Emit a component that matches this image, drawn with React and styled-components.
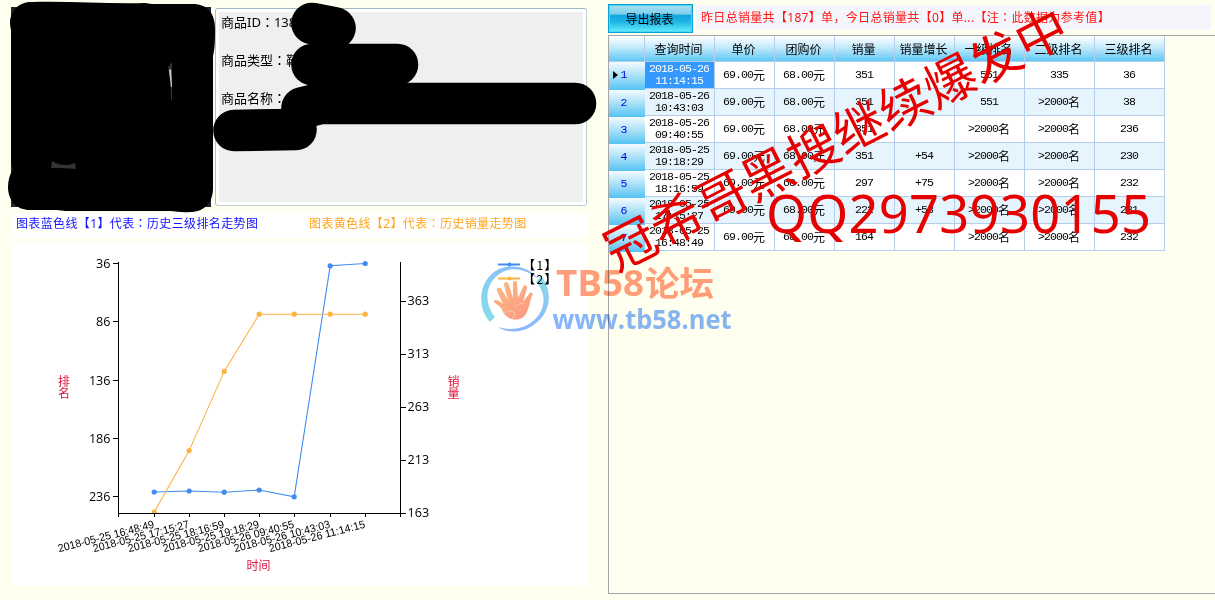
import React from "react"
import styled, { createGlobalStyle } from "styled-components"

const GlobalStyle = createGlobalStyle`
  body {
    margin: 0;
    overflow: hidden;
    background: #fffff0;
  }
`
const Container = styled.div`
  position: relative;
  display: flex;
  width: 1215px;
  height: 600px;
  overflow: hidden;
  background: #fffff0;
  font-family: "Noto Sans", "Noto Sans CJK SC", sans-serif;
`
const Left = styled.div`
  flex: none;
  width: 577px;
  padding: 7px 20px 0 11px;
`
const Right = styled.div`
  flex: 1;
  padding-top: 4px;
`
const Product = styled.div`
  display: flex;
  align-items: flex-start;
  gap: 4px;
`
const Photo = styled.div`
  width: 200px;
  height: 200px;
  background: #23222c;
`
const Info = styled.div`
  box-sizing: border-box;
  width: 372px;
  height: 198px;
  margin-top: 1px;
  padding: 3px;
  border: 1px solid;
  border-color: #9db7c4 #b5cfd4 #bcd3d6 #a9c2cc;
  border-radius: 3px;
  background: #fff;
`
const InfoBody = styled.div`
  box-sizing: border-box;
  height: 100%;
  padding: 0 2px;
  background: #efefef;
`
const InfoLine = styled.div`
  height: 38px;
  line-height: 20px;
  font-size: 13px;
  color: #000;
  white-space: nowrap;
`
const Colon = styled.span`
  font-family: "Noto Sans CJK TC", sans-serif;
  line-height: 1;
`
const Captions = styled.div`
  display: flex;
  box-sizing: border-box;
  height: 25px;
  margin-top: 6px;
  padding-left: 5px;
  background: #fff;
`
const Caption = styled.div`
  flex: none;
  width: ${({ $width }) => $width}px;
  font-size: 12px;
  line-height: 22px;
  letter-spacing: 0.37px;
  color: ${({ $color }) => $color};
  white-space: nowrap;
`
const ChartBox = styled.svg`
  display: block;
  margin-top: 5px;
  background: #fff;
`
const Toolbar = styled.div`
  display: flex;
  gap: 3px;
  height: 31px;
`
const Button = styled.button`
  box-sizing: border-box;
  width: 85px;
  height: 29px;
  padding: 0 2px 0 0;
  border: 1px solid #08a2d6;
  box-shadow: inset 0 0 0 1px #4fd4f5;
  background: linear-gradient(#a9e0f2 0%, #7ccfec 34%, #14a3dc 37%, #1fb4e6 62%, #62effc 100%);
  font-family: "Noto Sans CJK SC", sans-serif;
  font-size: 12px;
  line-height: 24px;
  color: #000;
`
const Notice = styled.div`
  box-sizing: border-box;
  width: 515px;
  height: 25px;
  margin-top: 1px;
  padding-left: 5px;
  background: #f4f6fb;
  font-size: 12px;
  line-height: 26px;
  letter-spacing: 0.32px;
  color: #ff1414;
  white-space: nowrap;
`
const Grid = styled.div`
  box-sizing: border-box;
  height: 559px;
  border: 1px solid #a5a5a8;
  border-right: none;
`
const Row = styled.div`
  display: grid;
  grid-template-columns: 36px 70px repeat(4, 60px) repeat(3, 70px);
  width: 556px;
  height: ${({ $head }) => ($head ? 26 : 27)}px;
  background: ${({ $alt }) => ($alt ? "#e6f5fd" : "#fff")};
`
const Cell = styled.div`
  box-sizing: border-box;
  display: flex;
  align-items: center;
  justify-content: center;
  padding-right: 1px;
  border-right: 1px solid #b4cdea;
  border-bottom: 1px solid #b4cdea;
  font-family: "Noto Sans CJK SC", sans-serif;
  font-size: 12px;
  line-height: 12px;
  text-align: center;
  white-space: nowrap;
  color: ${({ $selected }) => ($selected ? "#fff" : "#000")};
  background: ${({ $selected }) => ($selected ? "#3399ff" : "transparent")};
`
const HeadCell = styled(Cell)`
  padding-right: 2px;
  background: linear-gradient(#fff, #c4eafb 45%, #5ec8f6);
`
const RowHead = styled(Cell)`
  position: relative;
  padding: 0 7px 2px 0;
  margin: ${({ $first }) => ($first ? "0 0 -1px" : "1px 0 -1px")};
  border: none;
  background: linear-gradient(#f4fbfe, #a8e0f8 50%, #55c3f4);
  color: #0000e6;
`
const Pointer = styled.span`
  position: absolute;
  left: 4px;
  top: 9px;
  border: 4px solid transparent;
  border-left: 5px solid #000;
  border-right: none;
`
const Num = styled.span`
  font-family: "Liberation Mono", monospace;
  font-size: 11.5px;
  letter-spacing: -0.9px;
`
const Overlay = styled.svg`
  position: absolute;
  left: 0;
  top: 0;
  pointer-events: none;
`
const Blend = styled(Overlay)`
  mix-blend-mode: multiply;
`

const columns = ["查询时间", "单价", "团购价", "销量", "销量增长", "一级排名", "二级排名", "三级排名"]

const rows = [
  { date: "2018-05-26", time: "11:14:15", sales: 351, growth: "", first: 551, second: 335, third: 36 },
  { date: "2018-05-26", time: "10:43:03", sales: 351, growth: "", first: 551, second: 0, third: 38 },
  { date: "2018-05-26", time: "09:40:55", sales: 351, growth: "", first: 0, second: 0, third: 236 },
  { date: "2018-05-25", time: "19:18:29", sales: 351, growth: "+54", first: 0, second: 0, third: 230 },
  { date: "2018-05-25", time: "18:16:59", sales: 297, growth: "+75", first: 0, second: 0, third: 232 },
  { date: "2018-05-25", time: "17:15:27", sales: 222, growth: "+58", first: 0, second: 0, third: 231 },
  { date: "2018-05-25", time: "16:48:49", sales: 164, growth: "", first: 0, second: 0, third: 232 },
]

const rankTicks = [[36, 263.5], [86, 321.5], [136, 380.5], [186, 438.5], [236, 496.5]]
const salesTicks = [[363, 301.5], [313, 354.5], [263, 407.5], [213, 460.5], [163, 513.5]]
const tickX = [154.5, 189.5, 224.5, 259.5, 294.5, 330.5, 365.5]
const rankY = [492, 491, 492.2, 490, 496.8, 265.8, 263.5]
const salesY = [512, 450.6, 371.4, 314.2, 314.2, 314.2, 314.2]

// rank 0 means the item fell outside the first 2000
const Rank = ({ value }) =>
  value ? <Num>{value}</Num> : <><Num>&gt;2000</Num>名</>

const Series = ({ ys, color }) => (
  <g fill={color}>
    <polyline
      points={ys.map((y, i) => `${tickX[i] - 0.3},${y}`).join(" ")}
      fill="none"
      stroke={color}
      strokeWidth="1.1"
    />
    {ys.map((y, i) => (
      <circle key={i} cx={tickX[i] - 0.3} cy={y} r="2.6" />
    ))}
  </g>
)

function Chart() {
  const labels = [...rows].reverse()
  return (
    <ChartBox width="577" height="343" viewBox="11 243 577 343">
      <defs>
        <clipPath id="plot">
          <rect x="118" y="255" width="290" height="258" />
        </clipPath>
      </defs>
      <g clipPath="url(#plot)">
        <Series ys={rankY} color="#418cf0" />
        <Series ys={salesY} color="#fcb441" />
      </g>
      <path d="M118.5 262V517M118 513.5H406M400.5 262V517" stroke="#000" fill="none" />
      <g fontFamily="Open Sans" fontSize="12.6" fill="#000">
        {rankTicks.map(([n, y]) => (
          <g key={n}>
            <path d={`M113 ${y}h5`} stroke="#000" />
            <text x="110.5" y={y + 4} textAnchor="end">{n}</text>
          </g>
        ))}
        {salesTicks.map(([n, y]) => (
          <g key={n}>
            <path d={`M401 ${y}h5`} stroke="#000" />
            <text x="407.5" y={y + 3.8}>{n}</text>
          </g>
        ))}
      </g>
      <g fontFamily="Liberation Sans" fontSize="11" fill="#000">
        {labels.map((row, i) => (
          <g key={i}>
            <path d={`M${tickX[i]} 514v3`} stroke="#000" />
            <text
              transform={`translate(${tickX[i] + 0.3} 527.5) rotate(-14.5)`}
              textAnchor="end"
              textLength="99"
              lengthAdjust="spacingAndGlyphs"
            >
              {row.date} {row.time}
            </text>
          </g>
        ))}
      </g>
      <g fontFamily="Noto Sans CJK SC" fontSize="12" fill="#dc143c">
        <text x="58" y="386">排</text>
        <text x="58" y="398">名</text>
        <text x="447.5" y="386">销</text>
        <text x="447.5" y="398">量</text>
        <text x="246.5" y="570">时间</text>
      </g>
      <path d="M498 264.5h22" stroke="#418cf0" strokeWidth="2" />
      <circle cx="509.5" cy="264.5" r="2" fill="#418cf0" />
      <path d="M498 278.5h22" stroke="#fcb441" strokeWidth="2" />
      <circle cx="509.5" cy="278.5" r="2" fill="#fcb441" />
      <g fontFamily="Noto Sans CJK SC" fontSize="12" fill="#000">
        {[1, 2].map((n) => (
          <g key={n}>
            <text x="523" y={255.5 + n * 14} fontWeight="900">【</text>
            <text x="536.5" y={255.5 + n * 14}>{n}</text>
            <text x="544.5" y={255.5 + n * 14} fontWeight="900">】</text>
          </g>
        ))}
      </g>
    </ChartBox>
  )
}

const Scribbles = () => (
  <Overlay width="620" height="230" viewBox="0 0 620 230">
    <path d="M10 24C10 10 19 2 32 2C70 1 108 4 145 3L152 4H193C207 4 215 13 215 28C215 40 215 48 213 56V188C213 202 205 212 190 212C182 213 176 211 170 211H68C60 211 60 210 54 210H30C17 210 8 201 8 187C8 180 10 174 13 169C11 166 11 162 11 157V31Z" />
    <path d="M168 67l4-5v38l-1 0c0-12-1-21-3-33z" fill="#333" />
    <path d="M169 70l2-1 1 18-1 0z" fill="#ccc" />
    <path d="M52 161c7 5 16 5 23 2l1 6c-8-1-16-1-25-1z" fill="#333" />
    <g fill="none" stroke="#000" strokeWidth="41.6" strokeLinecap="round" strokeLinejoin="round">
      <path d="M312 23.5L335 28" />
      <path d="M312 64.5H397.5" />
      <path d="M302 108L320 103.5H575.5" />
      <path d="M234 130.5L296 129.5" />
    </g>
  </Overlay>
)

const ForumMark = () => (
  <Blend width="760" height="345" viewBox="0 0 760 345">
    <defs>
      <linearGradient id="ringLeft" x1="0" y1="1" x2="1" y2="0">
        <stop offset="0" stopColor="#7fdde8" />
        <stop offset="1" stopColor="#86b2fb" />
      </linearGradient>
      <linearGradient id="ringRight" x1="0" y1="0" x2="0" y2="1">
        <stop offset="0" stopColor="#82dbe9" />
        <stop offset="1" stopColor="#86b2fb" />
      </linearGradient>
      <linearGradient id="palm" x1="0" y1="0" x2="1" y2="1">
        <stop offset="0" stopColor="#fcb678" />
        <stop offset="1" stopColor="#fd927f" />
      </linearGradient>
    </defs>
    <g opacity="0.95">
      <path d="M490 322C475 305 480 278 499 269C514 263 531 268 538 279C525 268 509 266 498 275C485 285 484 303 495 317Z" fill="url(#ringLeft)" />
      <path d="M541 276C553 290 551 312 536 323C524 334 506 333 498 327C511 331 524 329 533 321C546 310 547 294 536 282Z" fill="url(#ringRight)" />
      <path d="M503 312C501 306 498 306 494 302C493 299 498 299 503 304L497 291C496 287 500 286 502 290L508 300L504 285C504 281 508 281 509 285L513 298L513 283C513 280 517 280 517 283L518 298L523 287C524 284 528 285 527 288L523 302L529 294C531 291 534 293 532 296C529 304 528 315 522 318C514 322 506 318 503 312Z" fill="url(#palm)" />
      <path d="M504 313c5-3 10-3 11 2c0 2-2 3-4 4M515 307c3-3 7-4 9-4" stroke="#fdc8a4" fill="none" />
      <text x="556" y="296" fontFamily="Open Sans" fontSize="36" fontWeight="700" textLength="88" lengthAdjust="spacingAndGlyphs" fill="#ff9878">TB58</text>
      <text x="645" y="296" fontFamily="Noto Sans CJK SC" fontSize="34" fontWeight="700" textLength="69" lengthAdjust="spacingAndGlyphs" fill="#ff9878">论坛</text>
      <text x="552.5" y="328.5" fontFamily="Open Sans" fontSize="26" fontWeight="700" textLength="179" lengthAdjust="spacingAndGlyphs" fill="#80b0ff">www.tb58.net</text>
    </g>
  </Blend>
)

const AdMark = () => (
  <Overlay width="1215" height="300" viewBox="0 0 1215 300">
    <g fill="#e60000">
      <text
        transform="translate(616.5 272) rotate(-27)"
        fontFamily="Noto Sans CJK SC"
        fontSize="51.2"
      >
        冠希哥黑搜继续爆发中
      </text>
      <text x="766" y="233.3" fontFamily="Noto Sans" fontSize="52.5" textLength="385">
        QQ2973930155
      </text>
    </g>
  </Overlay>
)

function App() {
  return (
    <>
      <GlobalStyle />
      <Container>
        <Left>
          <Product>
            <Photo />
            <Info>
              <InfoBody>
                <InfoLine>商品ID<Colon>：</Colon>138</InfoLine>
                <InfoLine>商品类型<Colon>：</Colon>鞋</InfoLine>
                <InfoLine>商品名称<Colon>：</Colon></InfoLine>
              </InfoBody>
            </Info>
          </Product>
          <Captions>
            <Caption $color="#1414ff" $width={293}>
              图表蓝色线【1】代表<Colon>：</Colon>历史三级排名走势图
            </Caption>
            <Caption $color="#ffa51e" $width={230}>
              图表黄色线【2】代表<Colon>：</Colon>历史销量走势图
            </Caption>
          </Captions>
          <Chart />
        </Left>
        <Right>
          <Toolbar>
            <Button>导出报表</Button>
            <Notice>
              昨日总销量共【187】单，今日总销量共【0】单...【注<Colon>：</Colon>此数据为参考值】
            </Notice>
          </Toolbar>
          <Grid>
            <Row $head>
              <HeadCell />
              {columns.map((name) => (
                <HeadCell key={name}>{name}</HeadCell>
              ))}
            </Row>
            {rows.map((row, i) => (
              <Row key={row.time} $alt={i % 2 === 1}>
                <RowHead $first={i === 0}>
                  {i === 0 && <Pointer />}
                  <Num>{i + 1}</Num>
                </RowHead>
                <Cell $selected={i === 0}>
                  <Num>
                    {row.date}
                    <br />
                    {row.time}
                  </Num>
                </Cell>
                <Cell><Num>69.00</Num>元</Cell>
                <Cell><Num>68.00</Num>元</Cell>
                <Cell><Num>{row.sales}</Num></Cell>
                <Cell><Num>{row.growth}</Num></Cell>
                <Cell><Rank value={row.first} /></Cell>
                <Cell><Rank value={row.second} /></Cell>
                <Cell><Num>{row.third}</Num></Cell>
              </Row>
            ))}
          </Grid>
        </Right>
        <Scribbles />
        <ForumMark />
        <AdMark />
      </Container>
    </>
  )
}

export default App
